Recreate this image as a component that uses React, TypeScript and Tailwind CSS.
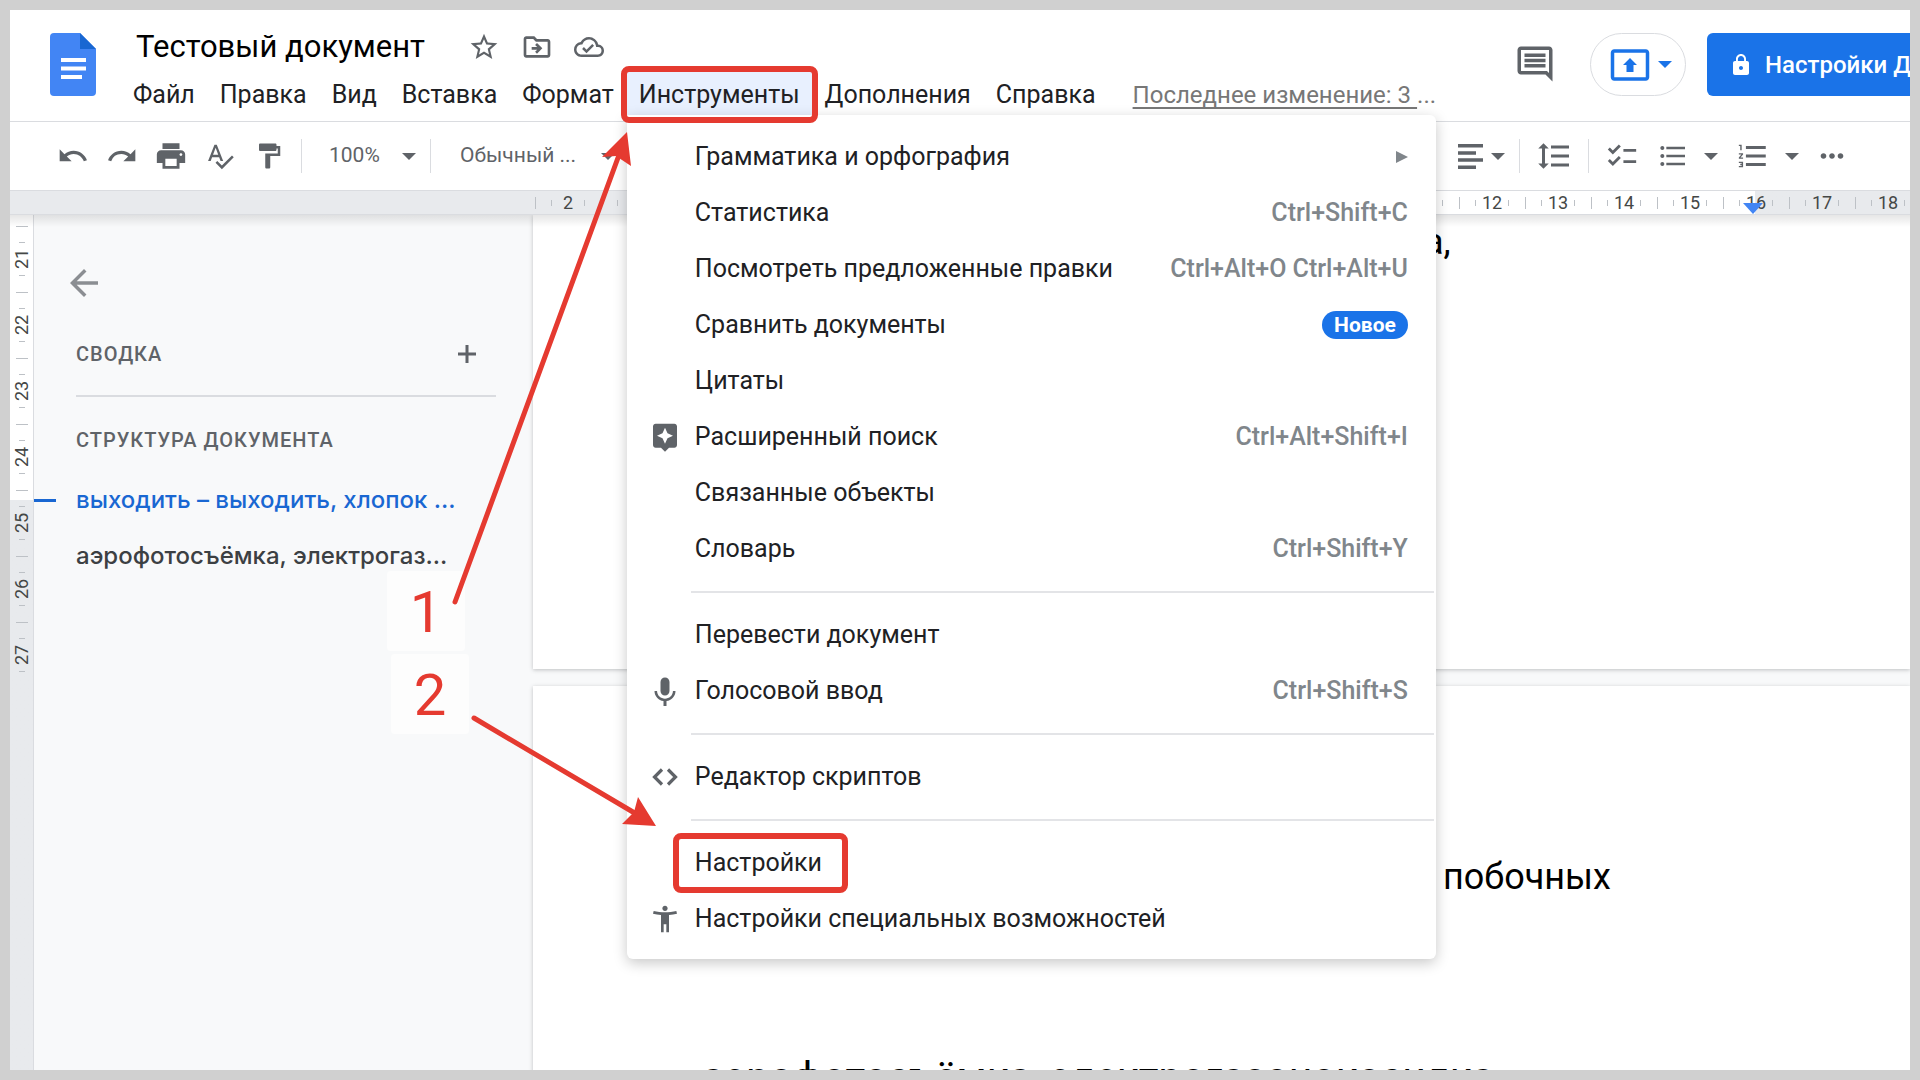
import React from "react";
import {
  MdAccessibilityNew,
  MdArrowBack,
  MdAssistant,
  MdChecklist,
  MdFormatLineSpacing,
  MdFormatListBulleted,
  MdFormatListNumbered,
  MdFormatPaint,
  MdKeyboardVoice,
  MdLock,
  MdMoreHoriz,
  MdOutlineCloudDone,
  MdOutlineDriveFileMove,
  MdOutlineInsertComment,
  MdPresentToAll,
  MdPrint,
  MdRedo,
  MdSpellcheck,
  MdStarBorder,
  MdUndo,
} from "react-icons/md";

type MenuEntry = {
  label: string;
  icon?: React.ReactNode;
  keys?: string;
  badge?: string;
  submenu?: boolean;
  marked?: boolean;
};

const CodeIcon = () => (
  <svg viewBox="0 0 26 18" className="h-[18px] w-[26px]" fill="none" stroke="currentColor" strokeWidth="3.2">
    <path d="M10 1.500L2.500 9l7.500 7.500M16 1.500L23.500 9 16 16.500" />
  </svg>
);

const PlusIcon = () => (
  <svg viewBox="0 0 18 18" className="h-[18px] w-[18px]" fill="none" stroke="currentColor" strokeWidth="3">
    <path d="M9 0v18M0 9h18" />
  </svg>
);

const toolsMenu: MenuEntry[][] = [
  [
    { label: "Грамматика и орфография", submenu: true },
    { label: "Статистика", keys: "Ctrl+Shift+C" },
    { label: "Посмотреть предложенные правки", keys: "Ctrl+Alt+O Ctrl+Alt+U" },
    { label: "Сравнить документы", badge: "Новое" },
    { label: "Цитаты" },
    { label: "Расширенный поиск", icon: <MdAssistant size={32} />, keys: "Ctrl+Alt+Shift+I" },
    { label: "Связанные объекты" },
    { label: "Словарь", keys: "Ctrl+Shift+Y" },
  ],
  [
    { label: "Перевести документ" },
    { label: "Голосовой ввод", icon: <MdKeyboardVoice size={36} />, keys: "Ctrl+Shift+S" },
  ],
  [{ label: "Редактор скриптов", icon: <CodeIcon /> }],
  [
    { label: "Настройки", marked: true },
    { label: "Настройки специальных возможностей", icon: <MdAccessibilityNew size={32} /> },
  ],
];

const columns = ["2", "1", "", "1", "2", "3", "4", "5", "6", "7", "8", "9", "10", "11", "12", "13", "14", "15", "16", "17", "18"];
const rows = ["21", "22", "23", "24", "25", "26", "27"];

// the printable area starts at zero and ends in the middle of the 16th centimetre
const columnBackground = (i: number) => {
  if (i === 18) return "bg-linear-to-r from-white from-[32px] to-[#e8eaed] to-[32px]";
  return i > 2 && i < 18 ? "bg-white" : "";
};

const Caret = ({ className = "" }: { className?: string }) => (
  <svg viewBox="0 0 14 7" className={`h-[7px] w-[14px] shrink-0 ${className}`} fill="currentColor">
    <path d="M0 0h14L7 7z" />
  </svg>
);

const Separator = () => <span className="h-[34px] w-px shrink-0 bg-[#dadce0]" />;

const DocsLogo = () => (
  <svg viewBox="0 0 46 63" className="h-[63px] w-[46px]">
    <path d="M4 0h26l16 16v43a4 4 0 0 1-4 4H4a4 4 0 0 1-4-4V4a4 4 0 0 1 4-4z" fill="#4285f4" />
    <path d="M30 0l16 16H30z" fill="#1967d2" />
    <path d="M11 25h25v4H11zM11 33.500h25v4H11zM11 42h21v4H11z" fill="#fff" />
  </svg>
);

const AlignLeft = () => (
  <svg viewBox="0 0 25 25" className="h-[25px] w-[25px]" fill="currentColor">
    <path d="M0 0h25v3.500H0zM0 7.200h18v3.500H0zM0 14.300h25v3.500H0zM0 21.500h18V25H0z" />
  </svg>
);

const ToolButton = ({
  label,
  className = "w-[49px] justify-center",
  children,
}: {
  label: string;
  className?: string;
  children: React.ReactNode;
}) => (
  <button aria-label={label} className={`flex h-10 shrink-0 items-center ${className}`}>
    {children}
  </button>
);

const ToolsMenu = () => (
  <div className="absolute top-full left-0 z-20 w-[809px] rounded-b-md rounded-tr-md bg-white pt-[14px] pb-3 shadow-[0_4px_14px_rgba(0,0,0,0.22)]">
    {toolsMenu.map((group, index) => (
      <React.Fragment key={index}>
        {index > 0 && <hr className="mt-[14px] mr-[2px] mb-[14px] ml-16 border-t-2 border-[#e3e4e7]" />}
        {group.map((item) => (
          <button key={item.label} className="flex h-14 w-full items-center pr-7 text-left text-[#202124]">
            <span className="flex w-[68px] shrink-0 items-center justify-center pl-2 text-[#5f6368]">{item.icon}</span>
            <span className="relative leading-9 whitespace-nowrap">
              {item.label}
              {item.marked && (
                <span className="absolute -inset-y-3 -right-[26px] -left-[22px] rounded-lg border-[6px] border-[#e53a30]" />
              )}
            </span>
            {item.keys && <span className="ml-auto font-medium whitespace-nowrap text-[#80868b]">{item.keys}</span>}
            {item.badge && (
              <span className="ml-auto rounded-full bg-[#1a73e8] px-3 text-[21px] leading-7 font-bold text-white">
                {item.badge}
              </span>
            )}
            {item.submenu && (
              <svg viewBox="0 0 12 12" className="ml-auto h-3 w-3" fill="#80868b">
                <path d="M0 0l12 6-12 6z" />
              </svg>
            )}
          </button>
        ))}
      </React.Fragment>
    ))}
  </div>
);

const Header = () => (
  <header className="flex h-[112px] shrink-0 border-b border-[#dadce0] pl-10">
    <a href="#" aria-label="Документы" className="mt-[23px] shrink-0">
      <DocsLogo />
    </a>
    <div className="ml-[25px] flex shrink-0 flex-col pt-4">
      <div className="flex h-[42px] items-center pl-[15px]">
        <h1 className="text-[31px] leading-10 whitespace-nowrap text-black">Тестовый документ</h1>
        <div className="ml-[43px] flex items-center gap-[21px] text-[#5f6368]">
          <button aria-label="Пометить"><MdStarBorder size={32} /></button>
          <button aria-label="Переместить"><MdOutlineDriveFileMove size={32} /></button>
          <button aria-label="Статус документа"><MdOutlineCloudDone size={30} /></button>
        </div>
      </div>
      <nav className="mt-1 flex h-[43px] gap-px whitespace-nowrap text-[#202124]">
        {["Файл", "Правка", "Вид", "Вставка", "Формат"].map((name) => (
          <button key={name} className="px-3 pt-[2px]">{name}</button>
        ))}
        <div className="relative flex">
          <button className="bg-[#e8f0fe] px-3 pt-[2px]">Инструменты</button>
          <ToolsMenu />
          <span className="absolute -inset-x-[6px] -top-[6px] -bottom-[8px] z-30 rounded-lg border-[6px] border-[#e53a30]" />
        </div>
        <button className="px-3 pt-[2px]">Дополнения</button>
        <button className="px-3 pt-[2px]">Справка</button>
        <a href="#" className="ml-6 flex items-center pt-[2px] text-2xl text-[#777]">
          <span className="underline underline-offset-4">Последнее изменение: 3&nbsp;</span>...
        </a>
      </nav>
    </div>
    <div className="ml-auto flex shrink-0 items-start pt-[23px]">
      <button aria-label="Комментарии" className="mt-[10px] text-[#5f6368]">
        <MdOutlineInsertComment size={42} />
      </button>
      <button aria-label="Показать" className="ml-[34px] flex h-[63px] w-24 items-center justify-center gap-[7px] rounded-full border border-[#dadce0] pl-1 text-[#1a73e8]">
        <MdPresentToAll size={42} />
        <Caret />
      </button>
      {/* the button runs past the right edge of the window */}
      <div className="ml-[21px] w-[203px] overflow-hidden">
        <button className="flex h-[63px] w-[290px] items-center gap-3 rounded-md bg-[#1a73e8] pl-[22px] text-2xl font-medium whitespace-nowrap text-white">
          <MdLock size={24} />
          Настройки Доступа
        </button>
      </div>
    </div>
  </header>
);

const Toolbar = () => (
  <div className="flex h-[68px] shrink-0 items-center pl-[38px] text-[#5f6368]">
    <ToolButton label="Отменить"><MdUndo size={32} /></ToolButton>
    <ToolButton label="Повторить"><MdRedo size={32} /></ToolButton>
    <ToolButton label="Печать"><MdPrint size={34} /></ToolButton>
    <ToolButton label="Правописание"><MdSpellcheck size={30} /></ToolButton>
    <ToolButton label="Копировать форматирование"><MdFormatPaint size={30} /></ToolButton>
    <span className="w-2" />
    <Separator />
    <button className="flex h-10 w-32 items-center justify-between pr-[14px] pl-[27px] text-[21px]">
      100%
      <Caret />
    </button>
    <Separator />
    <button className="flex h-10 w-[184px] items-center justify-between pl-[29px] text-[21px] whitespace-nowrap">
      Обычный ...
      <Caret />
    </button>
    <div className="ml-auto flex items-center pr-[60px]">
      <Separator />
      <ToolButton label="Выравнивание" className="w-[83px] justify-center gap-2 pl-2"><AlignLeft /><Caret /></ToolButton>
      <Separator />
      <ToolButton label="Интервал" className="w-[68px] justify-center"><MdFormatLineSpacing size={36} /></ToolButton>
      <Separator />
      <ToolButton label="Контрольный список" className="w-[66px] justify-center"><MdChecklist size={34} /></ToolButton>
      <ToolButton label="Маркированный список" className="ml-[2px] w-[61px] justify-between"><MdFormatListBulleted size={32} /><Caret /></ToolButton>
      <ToolButton label="Нумерованный список" className="ml-[18px] w-[63px] justify-between"><MdFormatListNumbered size={34} /><Caret /></ToolButton>
      <ToolButton label="Ещё" className="ml-[15px] w-9 justify-center"><MdMoreHoriz size={34} /></ToolButton>
    </div>
  </div>
);

const HorizontalRuler = () => (
  <div className="relative z-10 flex h-[25px] shrink-0 overflow-hidden border-y border-[#dadce0] bg-[#e8eaed] pl-[525px] text-lg text-[#444746]">
    {columns.map((name, i) => (
      <div key={i} className={`flex w-[66px] shrink-0 items-center ${columnBackground(i)}`}>
        <span className="h-3 w-px bg-[#bdc1c6]" />
        <span className="ml-[15px] h-[6px] w-px bg-[#bdc1c6]" />
        <span className="w-8 text-center leading-6">{name}</span>
        <span className="h-[6px] w-px bg-[#bdc1c6]" />
      </div>
    ))}
    <svg viewBox="0 0 20 11" className="absolute top-3 left-[1733px] h-[11px] w-5">
      <path d="M0 0h20L10 11z" fill="#4285f4" />
    </svg>
  </div>
);

const VerticalRuler = () => (
  <div className="w-6 shrink-0 border-r border-[#dadce0] bg-linear-to-b from-white from-[285px] to-[#e8eaed] to-[285px] pt-[11px] pl-px text-lg text-[#444746]">
    {rows.map((name) => (
      <div key={name} className="flex h-[66px] flex-col items-center">
        <span className="h-px w-3 shrink-0 bg-[#bdc1c6]" />
        <span className="mt-[15px] h-px w-[6px] shrink-0 bg-[#bdc1c6]" />
        <span className="flex h-8 shrink-0 -rotate-90 items-center">{name}</span>
        <span className="h-px w-[6px] shrink-0 bg-[#bdc1c6]" />
      </div>
    ))}
  </div>
);

const Outline = () => (
  <aside className="w-[499px] shrink-0 pt-[47px] pr-[37px]">
    <button aria-label="Закрыть структуру" className="ml-[29px] block text-[#8b8e92]">
      <MdArrowBack size={42} />
    </button>
    <div className="mt-8 ml-[42px] flex h-[61px] items-start justify-between border-b-2 border-[#dadce0] pr-5 text-[#5f6368]">
      <h2 className="text-xl leading-9 font-medium tracking-wider">СВОДКА</h2>
      <button aria-label="Добавить сводку" className="flex h-9 items-center">
        <PlusIcon />
      </button>
    </div>
    <h2 className="mt-[25px] ml-[42px] text-xl leading-9 font-medium tracking-wider text-[#5f6368]">СТРУКТУРА ДОКУМЕНТА</h2>
    <ul className="mt-[14px] font-['Inter'] text-2xl leading-[56px] font-medium whitespace-nowrap">
      <li className="flex items-center text-[#1967d2]">
        <span className="mr-5 h-[3px] w-[22px] bg-[#1967d2]" />
        <a href="#">выходить – выходить, хлопок ...</a>
      </li>
      <li className="pl-[42px] text-[#3c4043]">
        <a href="#">аэрофотосъёмка, электрогаз...</a>
      </li>
    </ul>
  </aside>
);

const Document = () => (
  <main className="flex min-w-0 flex-1 flex-col gap-[17px] text-4xl leading-[48px] text-black">
    <section className="h-[454px] shrink-0 bg-white pt-[3px] shadow-[0_1px_4px_rgba(60,64,67,0.3)]">
      <p className="pl-[891px]">а,</p>
    </section>
    <section className="h-[900px] shrink-0 bg-white pt-[167px] shadow-[0_1px_4px_rgba(60,64,67,0.3)]">
      <p className="pl-[910px]">побочных</p>
      <p className="mt-[152px] pl-[169px] text-[41px] leading-[48px] whitespace-nowrap">аэрофотосъёмка, электрогазонокосилка</p>
    </section>
  </main>
);

const Arrows = () => (
  <svg viewBox="0 0 1920 1080" className="pointer-events-none absolute -top-[10px] -left-[10px] z-40 h-[1080px] w-[1920px]" fill="#e53a30">
    <path d="M455 602L619 155M474 718L638 815" stroke="#e53a30" strokeWidth="5" strokeLinecap="round" />
    <path d="M627 132L602 157L616 156L631 166Z" />
    <path d="M656 826L638 797L634 812L622 824Z" />
  </svg>
);

const App = () => {
  return (
    <div className="relative flex h-screen flex-col overflow-hidden border-10 border-[#d0d0d0] bg-white font-['Roboto',sans-serif] text-[25px]">
      <Header />
      <Toolbar />
      <HorizontalRuler />
      <div className="relative flex min-h-0 flex-1 overflow-hidden bg-[#f8f9fa]">
        <div className="absolute inset-x-0 top-0 z-10 h-3 bg-linear-to-b from-black/10 to-transparent" />
        <VerticalRuler />
        <Outline />
        <Document />
      </div>
      <span className="absolute top-[561px] left-[377px] z-30 flex h-20 w-[78px] items-center justify-center rounded bg-[#fdfdfd] pt-[2px] text-[58px] text-[#e53a30]">
        1
      </span>
      <span className="absolute top-[644px] left-[381px] z-30 flex h-20 w-[78px] items-center justify-center rounded bg-[#fdfdfd] pt-[2px] text-[58px] text-[#e53a30]">
        2
      </span>
      <Arrows />
    </div>
  );
};

export default App;
